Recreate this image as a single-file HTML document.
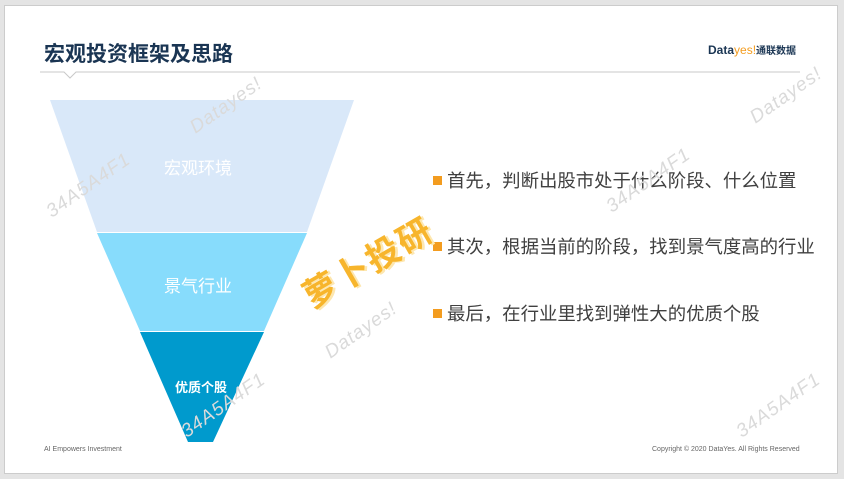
<!DOCTYPE html><html><head><meta charset="utf-8"><style>
body{margin:0;width:844px;height:479px;background:#e4e4e4;position:relative;overflow:hidden;font-family:"Liberation Sans","Noto Sans CJK SC",sans-serif}
.s{position:absolute;left:4px;top:5px;width:832px;height:467px;background:#fff;border:1px solid #ccc}
.t{position:absolute}
.wm{position:absolute;color:#dadada;font-size:19px;transform:rotate(-35deg);font-style:italic;letter-spacing:1px}
.b{position:absolute;left:433px;font-size:18.4px;color:#404040;white-space:nowrap}
.b:before{content:"";display:inline-block;width:9px;height:9px;background:#f39c1f;margin-right:5px;vertical-align:2px}
</style></head><body><div class="s"></div>
<div class="t" style="left:44px;top:38px;font-size:21px;font-weight:bold;color:#1a3553">宏观投资框架及思路</div>
<div class="t" style="left:708px;top:42px;font-size:12px;font-weight:bold;color:#1a3553">Data<span style="color:#f39c1f;font-weight:normal">yes!</span><span style="font-size:10px">通联数据</span></div>
<svg class="t" style="left:0;top:0" width="844" height="479">
<polyline points="40,72 64,72 70,78 76,72 800,72" fill="none" stroke="#c8c8c8" stroke-width="1"/>
<polygon points="50,100 354,100 307,232 97,232" fill="#d9e8f9"/>
<polygon points="97,233 307,233 264,331 140,331" fill="#87dcfc"/>
<polygon points="140,332 264,332 213,442 188,442" fill="#009acd"/>
</svg>
<div class="t" style="left:164px;top:154px;font-size:17px;color:#fff">宏观环境</div>
<div class="t" style="left:164px;top:272px;font-size:17px;color:#fff">景气行业</div>
<div class="t" style="left:175px;top:377px;font-size:13px;font-weight:bold;color:#fff">优质个股</div>
<div class="b" style="top:167px">首先，判断出股市处于什么阶段、什么位置</div>
<div class="b" style="top:233px">其次，根据当前的阶段，找到景气度高的行业</div>
<div class="b" style="top:300px">最后，在行业里找到弹性大的优质个股</div>
<div class="t" style="left:295px;top:236px;font-size:34px;font-weight:bold;color:#f7b52c;transform:rotate(-30deg);text-shadow:2px 2px 0 #fde7b0;letter-spacing:2px">萝卜投研</div>
<div class="wm" style="left:185px;top:95px">Datayes!</div>
<div class="wm" style="left:745px;top:85px">Datayes!</div>
<div class="wm" style="left:320px;top:320px">Datayes!</div>
<div class="wm" style="left:40px;top:175px">34A5A4F1</div>
<div class="wm" style="left:600px;top:170px">34A5A4F1</div>
<div class="wm" style="left:175px;top:395px">34A5A4F1</div>
<div class="wm" style="left:730px;top:395px">34A5A4F1</div>
<div class="t" style="left:44px;top:446px;font-size:7px;color:#666">AI Empowers Investment</div>
<div class="t" style="left:652px;top:446px;font-size:7px;color:#666">Copyright © 2020 DataYes. All Rights Reserved</div>
</body></html>
